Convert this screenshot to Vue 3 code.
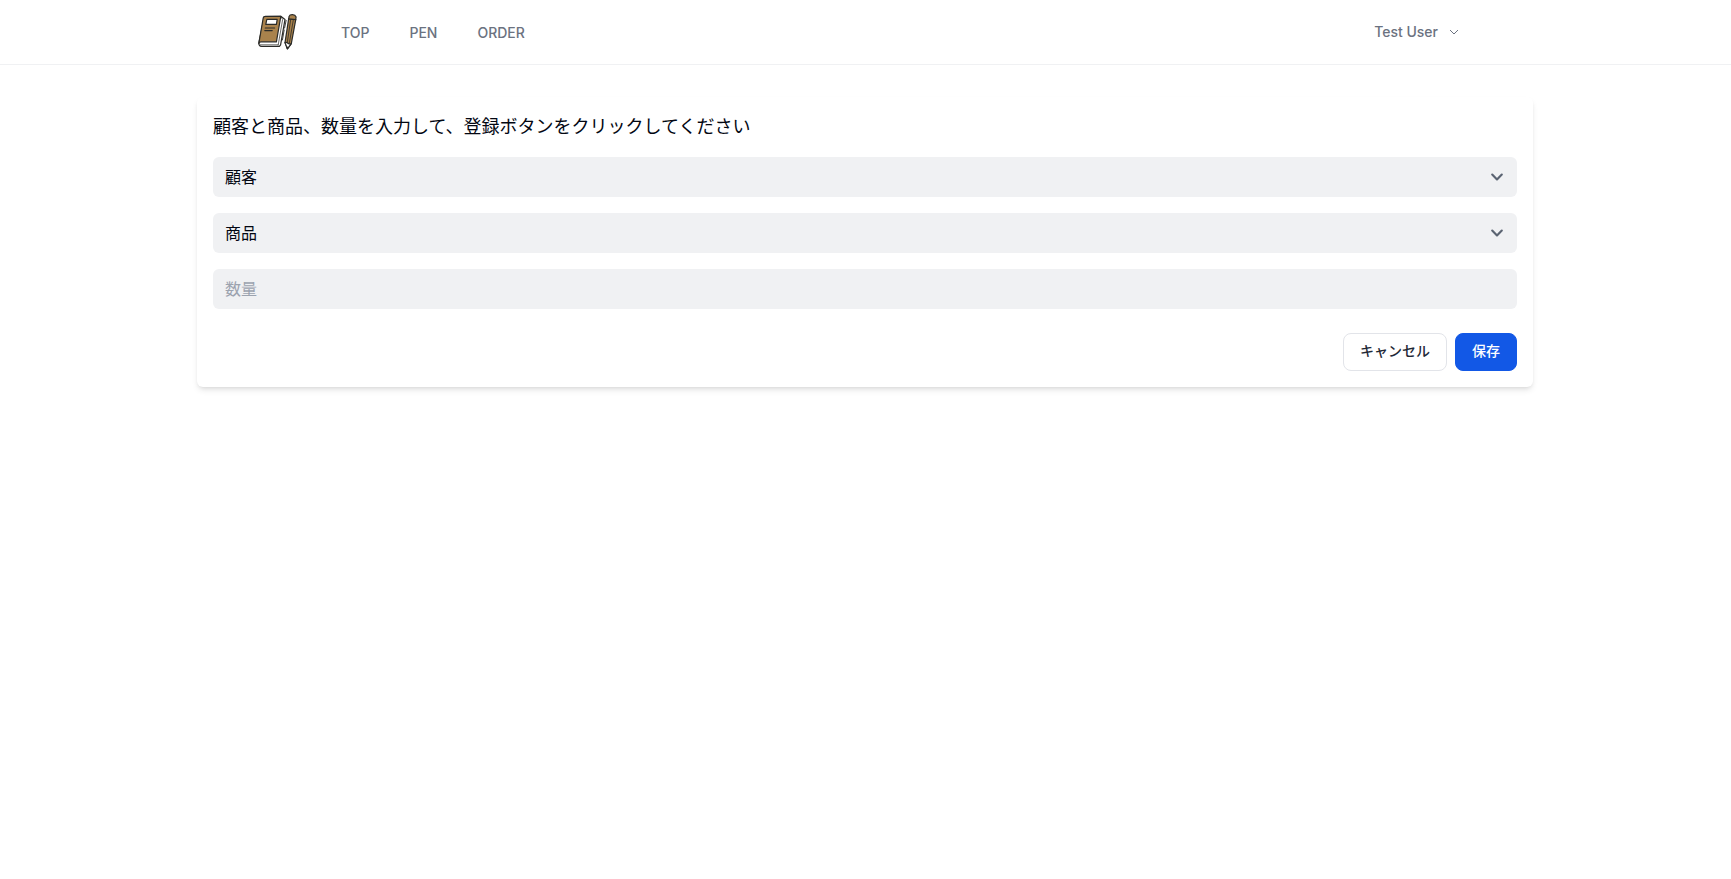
<script setup>
const links = ['TOP', 'PEN', 'ORDER']
const customers = ['顧客']
const products = ['商品']
</script>

<template>
  <div class="page">
    <nav class="nav">
      <div class="nav-inner">
        <svg class="logo" viewBox="0 0 40 40" fill="none" stroke="#2b2b28" stroke-width="1.2" stroke-linejoin="round" stroke-linecap="round">
          <path d="M6.3 4.6 22.8 4.3 27 7.4 22.6 32.8 21.4 34.4H3.6Q.6 34.2 .9 30.6Z" fill="#fff" />
          <path d="M5.2 6Q5.6 4.3 7.4 4.3H22.8L18.4 29.8H3Q1.4 29.8 .8 31.6Z" fill="#a9824c" />
          <path d="M8.8 7.4H19.2L18.4 12.4H7.8Z" fill="#fff" />
          <path d="M7.3 16H16.6M6.8 18.6H14.2" />
          <path d="M22.8 4.3 24.6 7.6 20.2 33M2.2 32.8H20" stroke-width=".7" />
          <path d="M28.1 8.4 26.6 16M26.2 18 24.4 28" stroke-width=".9" />
          <path d="M30.7 6.6 37.8 7.4 33.3 31.6 29.4 36.8 27 30.6Z" fill="#a9824c" />
          <path d="M27 30.6Q28.4 29.8 29.6 31T33.3 31.6L29.4 36.8Z" fill="#fff" />
          <path d="M30.7 6.8 31.1 4.4Q31.7 2.6 34.5 2.7T38.1 5L37.7 7.6Z" fill="#a9824c" />
          <path d="M32.7 7.6 29.3 30.4M35.3 8 31.4 30.8" stroke-width=".8" />
          <path d="M28.9 35.4 29.4 36.8 30.3 35.6Z" fill="#2b2b28" stroke-width=".8" />
        </svg>
        <div class="links">
          <a v-for="l in links" :key="l">{{ l }}</a>
        </div>
        <button class="user">
          Test User
          <svg width="16" height="16" viewBox="0 0 16 16" fill="none" stroke="#6b7280" stroke-linecap="round" stroke-linejoin="round">
            <path d="M4.3 6.3 8 10l3.7-3.7" />
          </svg>
        </button>
      </div>
    </nav>
    <main class="card">
      <h1>顧客と商品、数量を入力して、登録ボタンをクリックしてください</h1>
      <div v-for="(opts, i) in [customers, products]" :key="i" class="select">
        <span>{{ opts[0] }}</span>
        <svg width="24" height="24" viewBox="0 0 20 20" fill="none" stroke="#5b6472" stroke-width="1.8" stroke-linecap="round" stroke-linejoin="round">
          <path d="M6 8l4 4 4-4" />
        </svg>
      </div>
      <input class="field" placeholder="数量" />
      <div class="actions">
        <button class="btn cancel">キャンセル</button>
        <button class="btn save">保存</button>
      </div>
    </main>
  </div>
</template>

<style>
body { background: #fff; }
</style>

<style scoped>
.page { font-family: Inter, "Noto Sans CJK JP", sans-serif; color: #030712; min-height: 879px; }
.page * { box-sizing: border-box; }
button, input { font-family: inherit; margin: 0; }
.nav { border-bottom: 1px solid #f0f1f3; }
.nav-inner { width: 1280px; height: 64px; margin: 0 auto; padding: 0 32px; display: flex; align-items: center; }
.logo { width: 40px; height: 40px; }
.links { display: flex; gap: 40px; margin: 2px 0 0 43.5px; font-size: 14px; line-height: 20px; font-weight: 500; color: #6b7280; }
.user { display: flex; align-items: center; gap: 7.5px; margin-left: auto; margin-right: 12px; padding: 0; border: 0; background: none; font-size: 14px; line-height: 20px; font-weight: 500; color: #6b7280; }
.card { width: 1336px; margin: 32px 198px 0 197px; padding: 16px; border-radius: 6px; background: #fff; box-shadow: 0 4px 6px -1px rgba(0,0,0,.1), 0 2px 4px -2px rgba(0,0,0,.1); }
h1 { margin: 0 0 16px; font-size: 18px; line-height: 28px; font-weight: 400; }
.select, .field { display: flex; align-items: center; justify-content: space-between; width: 100%; height: 40px; margin: 0 0 16px; padding: 0 8px 0 12px; border: 0; border-radius: 6px; background: #f0f1f3; font-size: 16px; line-height: 24px; }
.field { display: block; margin: 0; }
.field::placeholder { color: #9ca3af; opacity: 1; }
.actions { display: flex; justify-content: flex-end; gap: 8px; margin-top: 24px; }
.btn { height: 38px; padding: 0 16px 2px; border: 1px solid #e2e4e9; border-radius: 8px; background: #fff; font-size: 14px; line-height: 20px; font-weight: 500; color: #1f2937; }
.save { background: #1258e6; border-color: #1258e6; color: #fff; }
</style>
